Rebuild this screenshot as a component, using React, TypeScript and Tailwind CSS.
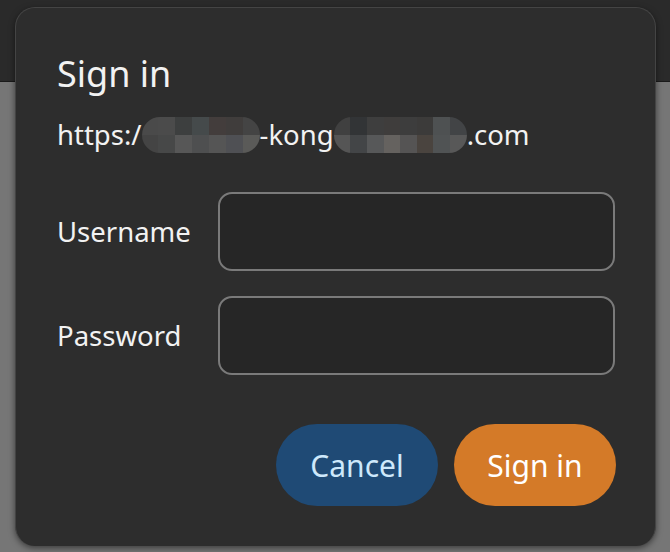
import React from "react";

// mosaic cells standing in for the blurred parts of the address
const blurA = {
  top: ["#4a4a4a", "#4b4b4b", "#3d3f3f", "#454a4b", "#433d3c", "#403d3c", "#444444"],
  bottom: ["#444444", "#474848", "#575757", "#4e4f50", "#555555", "#4f5054", "#5a5a58"],
};
const blurB = {
  top: ["#404040", "#323436", "#3e3e3e", "#3f3d3c", "#3d3d3d", "#3c3b3a", "#4e5152", "#424446"],
  bottom: ["#555555", "#434547", "#575859", "#65625f", "#555454", "#4a443f", "#505354", "#585858"],
};

function Mosaic({ cells, width }: { cells: { top: string[]; bottom: string[] }; width: number }) {
  return (
    <span
      className="inline-flex flex-col overflow-hidden rounded-full h-[36px] align-middle"
      style={{ width }}
    >
      <span className="flex h-[18px]">
        {cells.top.map((c, i) => (
          <span key={i} className="flex-1 h-full" style={{ backgroundColor: c }} />
        ))}
      </span>
      <span className="flex h-[18px]">
        {cells.bottom.map((c, i) => (
          <span key={i} className="flex-1 h-full" style={{ backgroundColor: c }} />
        ))}
      </span>
    </span>
  );
}

function Field({ label }: { label: string }) {
  return (
    <div className="flex items-center">
      <label className="w-[161px] shrink-0">{label}</label>
      <input
        type={label === "Password" ? "password" : "text"}
        className="flex-1 min-w-0 h-[79px] rounded-[14px] border-2 border-[#7a7a7a] bg-[#262626] outline-none px-4 text-[#f2f2f2]"
      />
    </div>
  );
}

export default function App() {
  return (
    <div
      className="relative w-[670px] h-[552px] overflow-hidden flex flex-col"
      style={{ fontFamily: '"Noto Sans", "Open Sans", sans-serif' }}
    >
      <div className="h-[82px] bg-[#2a2a2a] border-b border-[#1a1a1a]" />
      <div className="flex-1 bg-[#767676]" />

      <div className="absolute left-[15px] top-[7px] w-[641px] h-[539px] rounded-[20px] bg-[#2d2d2d] border border-[#444444] border-b-0 shadow-[0_2px_6px_rgba(0,0,0,0.5)] text-[#f2f2f2] text-[27.5px] pl-[41px] pr-[40px] pt-[43px] flex flex-col">
        <h1 className="text-[36px] leading-[46px]">Sign in</h1>
        <div className="mt-[20px] leading-[36px] flex items-center whitespace-nowrap">
          <span>https:/</span>
          <Mosaic cells={blurA} width={118} />
          <span>-kong</span>
          <Mosaic cells={blurB} width={133} />
          <span>.com</span>
        </div>

        <div className="mt-[39px] flex flex-col gap-[25px]">
          <Field label="Username" />
          <Field label="Password" />
        </div>

        <div className="mt-auto mb-[40px] -mr-px flex justify-end gap-[16px]">
          <button className="w-[162px] h-[82px] rounded-full bg-[#1f4a75] text-[#cde8fb] text-[30px]">
            Cancel
          </button>
          <button className="w-[162px] h-[82px] rounded-full bg-[#d47a28] text-white text-[30px]">
            Sign in
          </button>
        </div>
      </div>
    </div>
  );
}
